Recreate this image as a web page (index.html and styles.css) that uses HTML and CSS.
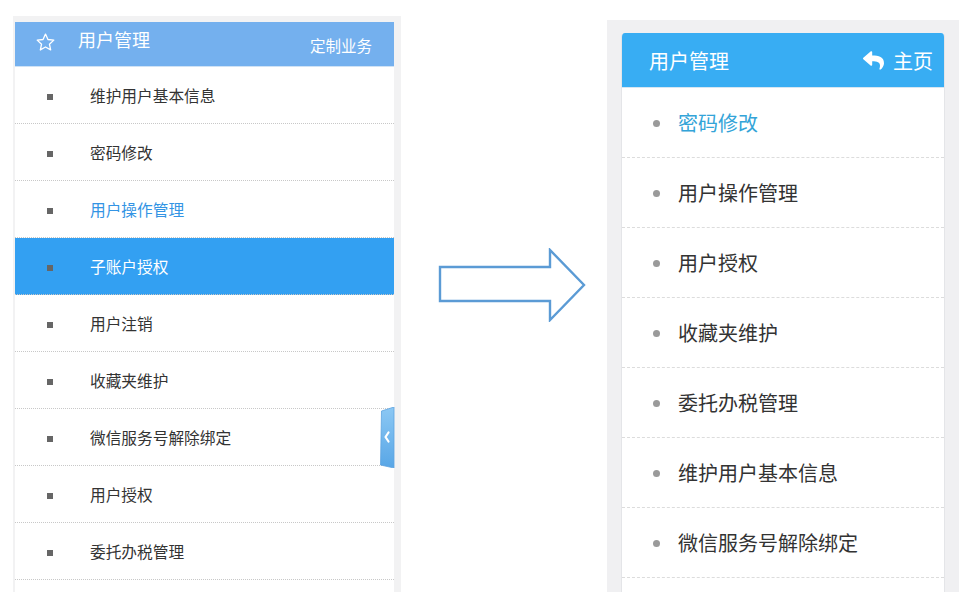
FILE: index.html
```html
<!DOCTYPE html>
<html lang="zh-CN">
<head>
<meta charset="utf-8">
<link rel="stylesheet" href="styles.css">
</head>
<body>
<div class="stage">
  <div class="lwrap">
    <div class="lpanel">
      <div class="lhead">
        <svg class="star" viewBox="0 0 24 24" width="21" height="21"><path d="M12 2.4l2.8 6.2 6.7.7-5 4.6 1.4 6.6L12 17.1l-5.9 3.4 1.4-6.6-5-4.6 6.7-.7z" fill="none" stroke="#fff" stroke-width="1.5" stroke-linejoin="round"/></svg>
        <span class="ltitle">用户管理</span>
        <span class="lextra">定制业务</span>
      </div>
      <ul class="llist">
        <li class="litem"><i class="sq"></i>维护用户基本信息</li>
        <li class="litem"><i class="sq"></i>密码修改</li>
        <li class="litem is-link"><i class="sq"></i>用户操作管理</li>
        <li class="litem is-sel"><i class="sq"></i>子账户授权</li>
        <li class="litem"><i class="sq"></i>用户注销</li>
        <li class="litem"><i class="sq"></i>收藏夹维护</li>
        <li class="litem"><i class="sq"></i>微信服务号解除绑定</li>
        <li class="litem"><i class="sq"></i>用户授权</li>
        <li class="litem"><i class="sq"></i>委托办税管理</li>
        <li class="litem"><i class="sq"></i>&nbsp;</li>
      </ul>
    </div>
    <svg class="tab" viewBox="0 0 15 61" width="15" height="61">
      <defs><linearGradient id="tg" x1="0" y1="0" x2="0" y2="1"><stop offset="0" stop-color="#8cc8f4"/><stop offset="1" stop-color="#58a6e6"/></linearGradient></defs>
      <polygon points="1.5,4 14,0 14,61 0.5,58" fill="url(#tg)" stroke="#5ea3e0" stroke-width="0.8"/>
      <polyline points="8.5,25.5 5.5,30 8.5,34.5" fill="none" stroke="#fff" stroke-width="2.2" stroke-linecap="round" stroke-linejoin="round"/>
    </svg>
  </div>

  <div class="arrow">
    <svg viewBox="0 0 150 74" width="150" height="74"><polygon points="3,19 113,19 113,2 147,37 113,72 113,53 3,53" fill="#fff" stroke="#5b9bd5" stroke-width="2.4"/></svg>
  </div>

  <div class="rwrap">
    <div class="rpanel">
      <div class="rhead">
        <span class="rtitle">用户管理</span>
        <span class="rhome">
          <svg viewBox="0 0 512 512" width="21" height="21"><path fill="#fff" d="M8.3 189.8L184.3 37.9C199.7 24.5 224 35.3 224 56v80.1c160.6 1.8 288 34 288 186.2 0 61.4-39.6 122.3-83.3 154.1-13.7 9.900-33.1-2.5-28.1-18.6 45.3-145-21.5-183.5-176.6-185.7V360c0 20.7-24.3 31.5-39.700 18.2l-176-152c-11.1-9.6-11.1-26.8 0-36.4z"/></svg>
          主页
        </span>
      </div>
      <ul class="rlist">
        <li class="ritem is-link"><i class="dot"></i>密码修改</li>
        <li class="ritem"><i class="dot"></i>用户操作管理</li>
        <li class="ritem"><i class="dot"></i>用户授权</li>
        <li class="ritem"><i class="dot"></i>收藏夹维护</li>
        <li class="ritem"><i class="dot"></i>委托办税管理</li>
        <li class="ritem"><i class="dot"></i>维护用户基本信息</li>
        <li class="ritem"><i class="dot"></i>微信服务号解除绑定</li>
        <li class="ritem"><i class="dot"></i>&nbsp;</li>
      </ul>
    </div>
  </div>
</div>
</body>
</html>
```

FILE: styles.css
```css
html, body {
  margin: 0;
  padding: 0;
  background: #fff;
  width: 972px;
  height: 605px;
  overflow: hidden;
  font-family: "Noto Sans CJK SC", "Liberation Sans", sans-serif;
}

.stage {
  display: flex;
  align-items: flex-start;
}

/* ---------- left ---------- */
.lwrap {
  position: relative;
  margin: 16px 0 0 13px;
  width: 388px;
  height: 576px;
  background: #f2f2f3;
  box-sizing: border-box;
  padding: 6px 7px 0 2px;
}

.lpanel {
  height: 100%;
  background: #fff;
  overflow: hidden;
}

.lhead {
  height: 45px;
  background: #74b0ee;
  border-bottom: 1px solid #cfe2f5;
  box-sizing: border-box;
  display: flex;
  align-items: center;
  color: #fff;
  padding: 0 22px 0 20px;
}

.star {
  margin-top: -3px;
}

.ltitle {
  font-size: 18px;
  margin-left: 22px;
  margin-top: -10px;
}

.lextra {
  margin-left: auto;
  font-size: 15.5px;
  margin-top: 1px;
}

.llist {
  list-style: none;
  margin: 0;
  padding: 0;
}

.litem {
  height: 57px;
  box-sizing: border-box;
  border-bottom: 1px dotted #c8c8c8;
  display: flex;
  align-items: center;
  font-size: 15.7px;
  color: #333;
  padding-left: 32px;
}

.sq {
  width: 6px;
  height: 6px;
  background: #666;
  margin-right: 37px;
  margin-top: 4px;
}

.litem.is-link { color: #3394e4; }
.litem.is-sel { background: #33a0f2; color: #fff; }

.tab {
  position: absolute;
  left: 367px;
  top: 391px;
}

/* ---------- arrow ---------- */
.arrow {
  margin: 248px 0 0 36px;
  line-height: 0;
}

/* ---------- right ---------- */
.rwrap {
  margin: 20px 0 0 20px;
  width: 352px;
  height: 572px;
  background: #f0f0f2;
  box-sizing: border-box;
  padding: 13px 14px 0 14px;
}

.rpanel {
  height: 100%;
  background: #fff;
  border-radius: 4px 4px 0 0;
  overflow: hidden;
  border-left: 1px solid #e4e5e8;
  border-right: 1px solid #e4e5e8;
}

.rhead {
  height: 55px;
  background: #38adf3;
  border-bottom: 1px solid #d6e6f2;
  box-sizing: border-box;
  display: flex;
  align-items: center;
  color: #fff;
  font-size: 20px;
  padding: 0 11px 0 27px;
}

.rhome {
  margin-left: auto;
  display: flex;
  align-items: center;
  gap: 9px;
}

.rlist {
  list-style: none;
  margin: 0;
  padding: 0;
}

.ritem {
  height: 70px;
  box-sizing: border-box;
  border-bottom: 1px dashed #dcdcdc;
  display: flex;
  align-items: center;
  font-size: 20px;
  color: #333;
  padding-left: 31px;
}

.dot {
  width: 7px;
  height: 7px;
  border-radius: 50%;
  background: #9a9a9a;
  margin-right: 18px;
  margin-top: 2px;
}

.ritem.is-link { color: #33a4d8; }
```
